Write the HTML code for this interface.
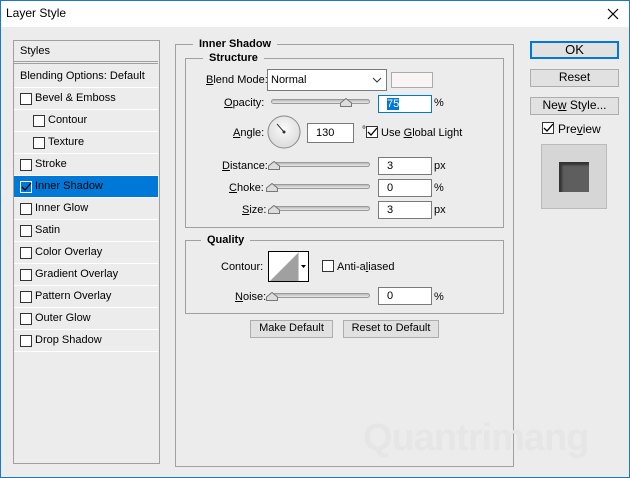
<!DOCTYPE html>
<html><head><meta charset="utf-8"><style>
*{box-sizing:border-box;margin:0;padding:0}
body{width:630px;height:478px;overflow:hidden;font-family:"Liberation Sans",sans-serif;font-size:11px;color:#000;background:#fff}
.win{position:absolute;left:0;top:0;width:630px;height:478px;border:1px solid #1b78c8;background:#ececec}
.tb{position:absolute;left:0;top:0;width:628px;height:26px;background:#fff}
.a{position:absolute;white-space:nowrap}
.box{position:absolute;border:1px solid #a0a0a0}
.lbl{position:absolute;background:#ececec;padding:0 6px;font-weight:bold;font-size:11px}
.row{position:absolute;left:0;width:144px;height:22px;border-bottom:1px solid #fff;line-height:21px}
.cb{position:absolute;width:12px;height:12px;border:1px solid #333;background:#fff}
.inp{position:absolute;background:#fff;border:1px solid #7a7a7a;height:18px;line-height:16px;padding-left:8px}
.sl{position:absolute;height:5px;border:1px solid #9a9a9a;border-radius:3px;background:linear-gradient(#bbb,#e8e8e8)}
.th{position:absolute;width:12px;height:9px}
.btn{position:absolute;border:1px solid #adadad;background:#e1e1e1;text-align:center;line-height:15px}
u{text-decoration:underline}
</style></head><body>
<div class="win">
<div class="tb"><div class="a" style="left:5px;top:5px;font-size:12px">Layer Style</div>
<svg class="a" style="left:606px;top:7px" width="12" height="12"><path d="M1 1L11 11M11 1L1 11" stroke="#000" stroke-width="1.2"/></svg></div>

<div class="box" style="left:12px;top:39px;width:147px;height:424px">
<div class="row" style="top:0;height:23px;border-bottom:3px double #a0a0a0;padding-left:6px">Styles</div>
<div class="row" style="top:25px;padding-left:6px">Blending Options: Default</div>
<div class="row" style="top:47px"><div class="cb" style="left:6px;top:5px"></div><span class="a" style="left:21px">Bevel &amp; Emboss</span></div>
<div class="row" style="top:69px"><div class="cb" style="left:19px;top:5px"></div><span class="a" style="left:34px">Contour</span></div>
<div class="row" style="top:91px"><div class="cb" style="left:19px;top:5px"></div><span class="a" style="left:34px">Texture</span></div>
<div class="row" style="top:113px"><div class="cb" style="left:6px;top:5px"></div><span class="a" style="left:21px">Stroke</span></div>
<div class="row" style="top:135px;background:#0078d7"><div class="cb" style="left:6px;top:5px;background:#0078d7;border-color:#fff"></div><svg class="a" style="left:7px;top:6px" width="11" height="11"><path d="M1 5L4 8L10 1" stroke="#000" fill="none" stroke-width="1.3"/></svg><span class="a" style="left:21px;color:#000">Inner Shadow</span></div>
<div class="row" style="top:157px"><div class="cb" style="left:6px;top:5px"></div><span class="a" style="left:21px">Inner Glow</span></div>
<div class="row" style="top:179px"><div class="cb" style="left:6px;top:5px"></div><span class="a" style="left:21px">Satin</span></div>
<div class="row" style="top:201px"><div class="cb" style="left:6px;top:5px"></div><span class="a" style="left:21px">Color Overlay</span></div>
<div class="row" style="top:223px"><div class="cb" style="left:6px;top:5px"></div><span class="a" style="left:21px">Gradient Overlay</span></div>
<div class="row" style="top:245px"><div class="cb" style="left:6px;top:5px"></div><span class="a" style="left:21px">Pattern Overlay</span></div>
<div class="row" style="top:267px"><div class="cb" style="left:6px;top:5px"></div><span class="a" style="left:21px">Outer Glow</span></div>
<div class="row" style="top:289px"><div class="cb" style="left:6px;top:5px"></div><span class="a" style="left:21px">Drop Shadow</span></div>
</div>

<div class="box" style="left:174px;top:43px;width:339px;height:423px"></div>
<div class="lbl" style="left:192px;top:37px">Inner Shadow</div>
<div class="box" style="left:184px;top:57px;width:319px;height:170px"></div>
<div class="lbl" style="left:202px;top:51px">Structure</div>

<div class="a" style="left:205px;top:73px"><u>B</u>lend Mode:</div>
<div class="inp" style="left:266px;top:68px;width:120px;height:22px;line-height:20px;padding-left:3px">Normal
<svg class="a" style="left:104px;top:7px" width="10" height="6"><path d="M1 1L5 5L9 1" stroke="#333" fill="none"/></svg></div>
<div class="a" style="left:390px;top:71px;width:42px;height:16px;background:#f8f4f4;border:1px solid #aaa"></div>

<div class="a" style="left:223px;top:96px"><u>O</u>pacity:</div>
<div class="sl" style="left:270px;top:98px;width:99px"></div>
<svg class="th" style="left:339px;top:97px"><path d="M0.5 8.5V5L6 0.5L11.5 5V8.5Z" fill="#ddd" stroke="#777"/></svg>
<div class="inp" style="left:377px;top:94px;width:54px;border:1px solid #0078d7"><span style="background:#0078d7;color:#fff">75</span></div>
<div class="a" style="left:433px;top:96px">%</div>

<div class="a" style="left:232px;top:126px"><u>A</u>ngle:</div>
<svg class="a" style="left:266px;top:114px" width="34" height="34"><defs><radialGradient id="g" cx="50%" cy="40%"><stop offset="0" stop-color="#fafafa"/><stop offset="1" stop-color="#e0e0e0"/></radialGradient></defs><circle cx="17" cy="17" r="16" fill="url(#g)" stroke="#888"/><path d="M17 17L10 9" stroke="#333"/><circle cx="17" cy="17" r="1.5" fill="#333"/></svg>
<div class="inp" style="left:306px;top:122px;width:47px;height:20px;line-height:18px">130</div>
<div class="a" style="left:361px;top:124px;font-size:10px">°</div>
<div class="cb" style="left:365px;top:125px"></div>
<svg class="a" style="left:366px;top:126px" width="11" height="11"><path d="M1 5L4 8L10 1" stroke="#000" fill="none" stroke-width="1.3"/></svg>
<div class="a" style="left:380px;top:126px">Use <u>G</u>lobal Light</div>

<div class="a" style="left:221px;top:159px"><u>D</u>istance:</div>
<div class="sl" style="left:270px;top:161px;width:99px"></div>
<svg class="th" style="left:267px;top:160px"><path d="M0.5 8.5V5L6 0.5L11.5 5V8.5Z" fill="#ddd" stroke="#777"/></svg>
<div class="inp" style="left:377px;top:156px;width:54px">3</div><div class="a" style="left:433px;top:159px">px</div>

<div class="a" style="left:228px;top:181px"><u>C</u>hoke:</div>
<div class="sl" style="left:268px;top:183px;width:101px"></div>
<svg class="th" style="left:265px;top:182px"><path d="M0.5 8.5V5L6 0.5L11.5 5V8.5Z" fill="#ddd" stroke="#777"/></svg>
<div class="inp" style="left:377px;top:178px;width:54px">0</div><div class="a" style="left:433px;top:181px">%</div>

<div class="a" style="left:241px;top:203px"><u>S</u>ize:</div>
<div class="sl" style="left:270px;top:205px;width:99px"></div>
<svg class="th" style="left:267px;top:204px"><path d="M0.5 8.5V5L6 0.5L11.5 5V8.5Z" fill="#ddd" stroke="#777"/></svg>
<div class="inp" style="left:377px;top:200px;width:54px">3</div><div class="a" style="left:433px;top:203px">px</div>

<div class="box" style="left:184px;top:239px;width:319px;height:74px"></div>
<div class="lbl" style="left:200px;top:233px">Quality</div>
<div class="a" style="left:220px;top:260px">Contour:</div>
<div class="a" style="left:267px;top:250px;width:41px;height:31px;border:1px solid #000;background:#fff">
<svg class="a" style="left:1px;top:1px" width="28" height="28"><path d="M0 28L28 0V28Z" fill="#a0a0a0"/></svg>
<div class="a" style="left:29px;top:0;width:1px;height:29px;background:#ccc"></div>
<svg class="a" style="left:32px;top:13px" width="5" height="3"><path d="M0 0H5L2.5 3Z" fill="#000"/></svg></div>
<div class="cb" style="left:321px;top:259px"></div>
<div class="a" style="left:336px;top:260px">Anti-a<u>l</u>iased</div>
<div class="a" style="left:234px;top:290px"><u>N</u>oise:</div>
<div class="sl" style="left:268px;top:292px;width:101px"></div>
<svg class="th" style="left:265px;top:291px"><path d="M0.5 8.5V5L6 0.5L11.5 5V8.5Z" fill="#ddd" stroke="#777"/></svg>
<div class="inp" style="left:377px;top:286px;width:54px">0</div><div class="a" style="left:433px;top:290px">%</div>

<div class="btn" style="left:249px;top:319px;width:83px;height:18px">Make Default</div>
<div class="btn" style="left:342px;top:319px;width:96px;height:18px">Reset to Default</div>

<div class="a" style="left:362px;top:416px;font-size:38px;color:#e6e6e6;letter-spacing:-1px;font-weight:bold">Quantrimang</div>

<div class="btn" style="left:529px;top:40px;width:89px;height:18px;border:2px solid #0078d7;line-height:14px;font-size:13px">OK</div>
<div class="btn" style="left:529px;top:68px;width:89px;height:18px;font-size:12px">Reset</div>
<div class="btn" style="left:529px;top:96px;width:89px;height:18px;font-size:12px">Ne<u>w</u> Style...</div>
<div class="cb" style="left:541px;top:121px"></div>
<svg class="a" style="left:542px;top:122px" width="11" height="11"><path d="M1 5L4 8L10 1" stroke="#000" fill="none" stroke-width="1.3"/></svg>
<div class="a" style="left:557px;top:121px;font-size:12px">Pre<u>v</u>iew</div>
<div class="a" style="left:540px;top:143px;width:66px;height:65px;background:#d6d6d6;border:1px solid #bbb">
<div class="a" style="left:17px;top:17px;width:30px;height:30px;background:#5e5e5e;box-shadow:inset 3px 3px 2px #333"></div></div>
</div>
</body></html>
